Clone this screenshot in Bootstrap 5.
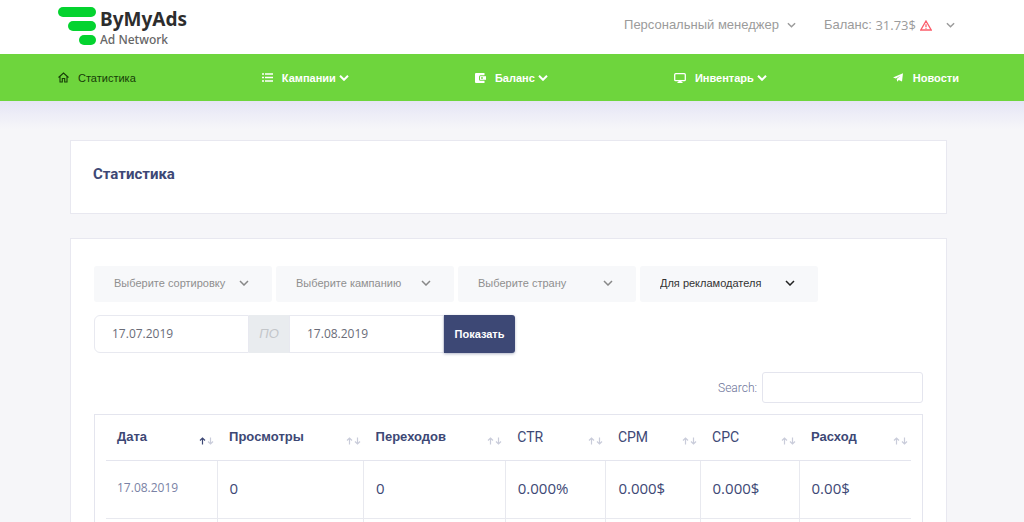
<!DOCTYPE html>
<html lang="ru">
<head>
<meta charset="utf-8">
<meta name="viewport" content="width=device-width, initial-scale=1">
<title>ByMyAds – Статистика</title>
<link href="https://cdn.jsdelivr.net/npm/bootstrap@5.3.0/dist/css/bootstrap.min.css" rel="stylesheet">
<style>
  body { background: #f6f6f9; color: #3d4875; font-family: "Liberation Sans", Arial, sans-serif; font-size: 12px; }
  .num { font-family: "Open Sans", sans-serif; }
  .shell { padding-left: 58px; padding-right: 65px; }
  .topbar { height: 54px; }
  .brand { margin-top: 6px; }
  .brand-name { font: 700 19px/26px "Noto Sans", sans-serif; color: #2d2d2d; }
  .brand-sub { font: 500 12px/15px "Noto Sans", sans-serif; color: #666; }
  .top-link { color: #9b9b9b; font-size: 13px; line-height: 18px; text-decoration: none; }
  .account-chev { margin-left: 14px; }
  .main-menu { background: #6ed53d; height: 47px; }
  .menu-link { color: #fff; font-size: 11px; font-weight: 700; line-height: 18px; text-decoration: none; }
  .menu-link.current { color: #173c08; font-weight: 400; }
  .menu-icon { margin-right: 9px; }
  .menu-chev { margin-left: 3px; }
  .fade-strip { background: linear-gradient(#e5e5f5, #f6f6f9); height: 28px; }
  .content { padding: 11px 77px 0 70px; }
  .panel { background: #fff; border: 1px solid #e8e8f0; }
  .panel h1 { font: 700 15px/20px Roboto, sans-serif; }
  .title-panel { padding: 23px 22px 29px; }
  .data-panel { margin-top: 24px; padding: 27px 23px; }
  .filters { gap: 4px; }
  .filter { width: 178px; height: 36px; border: 0; border-radius: 3px; padding: 0 36px 2px 20px; appearance: none; color: #8f8f8f; font-size: 11px;
    background: #f7f8fa url("data:image/svg+xml,%3Csvg xmlns='http://www.w3.org/2000/svg' width='10' height='6' fill='none' stroke='%23888' stroke-width='1.5'%3E%3Cpath d='M1 1l4 4 4-4'/%3E%3C/svg%3E") no-repeat right 23px top 14px; }
  .filter.chosen { color: #333; background-image: url("data:image/svg+xml,%3Csvg xmlns='http://www.w3.org/2000/svg' width='10' height='6' fill='none' stroke='%23222' stroke-width='1.5'%3E%3Cpath d='M1 1l4 4 4-4'/%3E%3C/svg%3E"); }
  .dates { margin-top: 13px; height: 38px; }
  .date-box { width: 155px; border: 1px solid #e8e9f0; padding: 0 17px; color: #6a6c78; font-size: 12px; }
  .date-sep { width: 40px; background: #e9ecef; color: #c3c6ca; font-style: italic; font-size: 13px; }
  .show-btn { width: 71px; background: #3d4875; color: #fff; font-size: 11px; font-weight: 700; border: 0; border-radius: 0 3px 3px 0; padding: 0; box-shadow: 0 1px 3px #3d487566; }
  .search-row { margin-top: 19px; gap: 5px; }
  .search-row label { color: #6b7398; font-family: Roboto, sans-serif; font-weight: 300; }
  .search-box { width: 161px; height: 31px; border: 1px solid #e4e5ee; border-radius: 3px; padding: 0 8px; }
  .table-frame { margin-top: 11px; border: 1px solid #e4e5ee; padding: 0 11px; }
  .stats { width: 100%; table-layout: fixed; border-collapse: collapse; }
  .stats th { height: 45px; padding: 0 3px 0 12px; border-bottom: 1px solid #e4e5ee; font-size: 13px; line-height: 18px; }
  .stats th.plain { font: 400 14px/18px Roboto, sans-serif; }
  .stats td { height: 58px; padding: 0 12px 2px; border-bottom: 1px solid #e8e9ef; border-right: 1px solid #e8e9ef; font-size: 15px; }
  .stats th:first-child, .stats td:first-child { padding-left: 11px; }
  .stats td:last-child { border-right: 0; }
  .stats .day { font-size: 12px; color: #7a82a5; }
  .sort { color: #c9ccda; padding-top: 9px; }
  .sort.asc { --up: #3d4875; }
  .arrow-up { stroke: var(--up, currentColor); }
</style>
</head>
<body class="vh-100 overflow-hidden">
<svg class="d-none" aria-hidden="true">
  <symbol id="chev" viewBox="0 0 10 6"><path d="M1 1l4 4 4-4" fill="none" stroke="currentColor" stroke-width="1.6"/></symbol>
  <symbol id="sorter" viewBox="0 0 15 8"><path class="arrow-up" d="M3.500 7.500V1M1 3.500L3.500 1 6 3.500" fill="none" stroke-width="1.2"/><path d="M11.500 .5V7M9 4.500L11.500 7 14 4.500" fill="none" stroke="currentColor" stroke-width="1.2"/></symbol>
</svg>

<header class="topbar bg-white shell d-flex justify-content-between align-items-start">
  <a href="#" class="brand d-flex text-decoration-none" aria-label="ByMyAds">
    <svg width="38" height="40" viewBox="0 0 38 40" fill="#04d32f"><rect y="1" width="38" height="10" rx="5"/><rect x="10" y="15" width="28" height="10" rx="5"/><rect x="21" y="29" width="17" height="10" rx="5"/></svg>
    <span class="d-flex flex-column ms-1"><span class="brand-name">ByMyAds</span><span class="brand-sub">Ad Network</span></span>
  </a>
  <div class="d-flex align-items-center pt-3">
    <a href="#" class="top-link d-flex align-items-center me-4">Персональный менеджер<svg class="ms-2" width="9" height="6"><use href="#chev"/></svg></a>
    <a href="#" class="top-link d-flex align-items-center ms-1">Баланс:&nbsp;<span class="num">31.73$</span>
      <svg class="ms-1" width="12" height="11" viewBox="0 0 12 11" fill="none" stroke="#fb5d6b" stroke-width="1.3"><path d="M6 1L11.200 10H.8zM6 4.200v2.800M6 7.800v1"/></svg>
      <svg class="account-chev me-1" width="9" height="6"><use href="#chev"/></svg></a>
  </div>
</header>

<nav class="main-menu shell d-flex justify-content-between align-items-center">
  <a href="#" class="menu-link current d-flex align-items-center"><svg class="menu-icon" width="11" height="11" viewBox="0 0 11 11" fill="none" stroke="currentColor" stroke-width="1.1"><path d="M.5 5.500l5-4.500 5 4.500M2 4.500V10h2.300V6.500h2.400V10H9V4.500"/></svg>Статистика</a>
  <a href="#" class="menu-link d-flex align-items-center"><svg class="menu-icon" width="11" height="9" viewBox="0 0 11 9" stroke="currentColor" stroke-width="1.3"><path d="M0 1h2M3 1h8M0 4.500h2M3 4.500h8M0 8h2M3 8h8"/></svg>Кампании<svg class="menu-chev" width="10" height="6" viewBox="0 0 10 6"><path d="M1 .8l4 4 4-4" fill="none" stroke="currentColor" stroke-width="2"/></svg></a>
  <a href="#" class="menu-link d-flex align-items-center"><svg class="menu-icon" width="11" height="10" viewBox="0 0 11 10"><path d="M1 0h8.500v2.200H5.500q-1.500 0-1.500 1.500v2.600q0 1.500 1.500 1.500h4V10H1Q0 10 0 9V1q0-1 1-1z" fill="currentColor"/><path d="M5 3.200h6v3.600H5z" fill="currentColor"/><circle cx="7" cy="5" r=".9" fill="#6ed53d"/></svg>Баланс<svg class="menu-chev" width="10" height="6" viewBox="0 0 10 6"><path d="M1 .8l4 4 4-4" fill="none" stroke="currentColor" stroke-width="2"/></svg></a>
  <a href="#" class="menu-link d-flex align-items-center"><svg class="menu-icon" width="12" height="10" viewBox="0 0 12 10"><rect x=".7" y=".7" width="10.600" height="7" rx="1" fill="none" stroke="currentColor" stroke-width="1.3"/><path d="M3 10l3-3.200L9 10z" fill="currentColor"/></svg>Инвентарь<svg class="menu-chev" width="10" height="6" viewBox="0 0 10 6"><path d="M1 .8l4 4 4-4" fill="none" stroke="currentColor" stroke-width="2"/></svg></a>
  <a href="#" class="menu-link d-flex align-items-center"><svg class="menu-icon" width="11" height="9" viewBox="0 0 11 9" fill="currentColor"><path d="M0 4.500L10 .3 9 8.500 5.800 7 4.200 8.800 3.700 6 7.500 2.800 2.800 5.600z"/></svg>Новости</a>
</nav>
<div class="fade-strip"></div>

<main class="content">
  <section class="panel title-panel"><h1 class="m-0">Статистика</h1></section>
  <section class="panel data-panel">
    <form>
      <div class="filters d-flex flex-wrap">
        <select class="filter" aria-label="Сортировка"><option>Выберите сортировку</option></select>
        <select class="filter" aria-label="Кампания"><option>Выберите кампанию</option></select>
        <select class="filter" aria-label="Страна"><option>Выберите страну</option></select>
        <select class="filter chosen" aria-label="Роль"><option>Для рекламодателя</option></select>
      </div>
      <div class="dates d-flex">
        <input class="date-box num rounded-start" type="text" value="17.07.2019" aria-label="Дата с">
        <span class="date-sep d-flex align-items-center justify-content-center">ПО</span>
        <input class="date-box num" type="text" value="17.08.2019" aria-label="Дата по">
        <button class="show-btn" type="button">Показать</button>
      </div>
    </form>
    <div class="search-row d-flex justify-content-end align-items-center">
      <label for="search">Search:</label><input id="search" class="search-box" type="search">
    </div>
    <div class="table-frame">
      <table class="stats">
        <colgroup><col style="width:13.8%"><col style="width:18.2%"><col style="width:17.6%"><col style="width:12.5%"><col style="width:11.7%"><col style="width:12.3%"><col style="width:13.9%"></colgroup>
        <thead><tr>
          <th><div class="d-flex justify-content-between">Дата<svg class="sort asc" width="15" height="17"><use href="#sorter"/></svg></div></th>
          <th><div class="d-flex justify-content-between">Просмотры<svg class="sort" width="15" height="17"><use href="#sorter"/></svg></div></th>
          <th><div class="d-flex justify-content-between">Переходов<svg class="sort" width="15" height="17"><use href="#sorter"/></svg></div></th>
          <th class="plain"><div class="d-flex justify-content-between">CTR<svg class="sort" width="15" height="17"><use href="#sorter"/></svg></div></th>
          <th class="plain"><div class="d-flex justify-content-between">CPM<svg class="sort" width="15" height="17"><use href="#sorter"/></svg></div></th>
          <th class="plain"><div class="d-flex justify-content-between">CPC<svg class="sort" width="15" height="17"><use href="#sorter"/></svg></div></th>
          <th><div class="d-flex justify-content-between">Расход<svg class="sort" width="15" height="17"><use href="#sorter"/></svg></div></th>
        </tr></thead>
        <tbody class="num">
          <tr><td class="day">17.08.2019</td><td>0</td><td>0</td><td>0.000%</td><td>0.000$</td><td>0.000$</td><td>0.00$</td></tr>
          <tr><td></td><td></td><td></td><td></td><td></td><td></td><td></td></tr>
        </tbody>
      </table>
    </div>
  </section>
</main>
<script src="https://cdn.jsdelivr.net/npm/bootstrap@5.3.0/dist/js/bootstrap.bundle.min.js"></script>
</body>
</html>
